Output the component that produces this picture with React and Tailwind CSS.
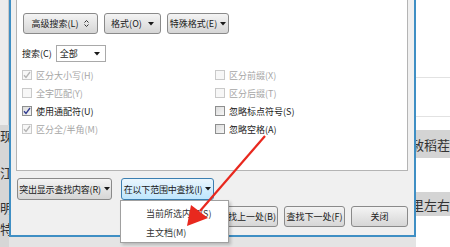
import React from "react";

const FONT = { fontFamily: '"Noto Sans CJK SC", "Noto Sans", sans-serif' };

const Caret = () => (
  <svg width="6" height="4" viewBox="0 0 6 4" className="shrink-0">
    <path d="M0 0 L6 0 L3 3.5 Z" fill="#1a1a1a" />
  </svg>
);

const UpDown = () => (
  <svg width="5" height="7" viewBox="0 0 5 7" className="shrink-0">
    <path d="M0.5 2.5 L2.5 0.5 L4.5 2.5" stroke="#333" strokeWidth="1" fill="none" />
    <path d="M0.5 4.5 L2.5 6.5 L4.5 4.5" stroke="#333" strokeWidth="1" fill="none" />
  </svg>
);

const Button = ({ children, className = "", active = false }) => (
  <div
    className={
      "flex items-center justify-center gap-[6px] whitespace-nowrap rounded-[3px] border text-[9px] leading-none text-[#1a1a1a] " +
      (active
        ? "border-[#3c7fb1] bg-gradient-to-b from-[#eaf6fd] to-[#bee6fd] "
        : "border-[#8a8a8a] bg-gradient-to-b from-[#f4f4f4] to-[#d6d6d6] ") +
      className
    }
  >
    {children}
  </div>
);

const Check = ({ checked, disabled }) => (
  <div
    className={
      "flex h-[10px] w-[10px] shrink-0 items-center justify-center border " +
      (disabled
        ? "border-[#c9c9c9] bg-[#f7f7f7]"
        : "border-[#8e8f8f] bg-gradient-to-br from-[#dcdcdc] to-[#f6f6f6]")
    }
  >
    {checked && (
      <svg width="8" height="8" viewBox="0 0 8 8">
        <path
          d="M1 4.2 L3 6.5 L7 1"
          stroke={disabled ? "#b4b4b4" : "#2f3a8f"}
          strokeWidth="1.3"
          fill="none"
        />
      </svg>
    )}
  </div>
);

const Option = ({ label, checked = false, disabled = false }) => (
  <div className="flex h-[18px] items-center gap-[4px]">
    <Check checked={checked} disabled={disabled} />
    <span className={"text-[9px] leading-none " + (disabled ? "text-[#a6a6a6]" : "text-[#1a1a1a]")}>
      {label}
    </span>
  </div>
);

export default function App() {
  return (
    <div className="relative flex h-[247px] w-[450px] overflow-hidden bg-[#e2e2e2]" style={FONT}>
      {/* left edge of the document behind */}
      <div className="flex h-full w-[9px] shrink-0 flex-col">
        <div className="h-[125px] border-r border-[#c8c8c8] bg-[#ececec]" />
        <div className="flex flex-1 flex-col items-start bg-[#d6d6d6] text-[13px] leading-none text-[#333]">
          <span className="mt-[4px] whitespace-nowrap">现</span>
          <span className="mt-[24px] whitespace-nowrap">江</span>
          <span className="mt-[22px] whitespace-nowrap">明</span>
          <span className="mt-[8px] whitespace-nowrap">特</span>
        </div>
      </div>

      {/* dialog */}
      <div className="relative z-10 flex w-[407px] shrink-0 flex-col">
        <div className="flex h-[237px] flex-col border-x-2 border-b-2 border-[#3f8fc4] bg-[#f0f0f0] pl-[5px] pr-[6px]">
          {/* options panel */}
          <div className="flex h-[171px] flex-col border-x border-b border-[#b4b4b4] bg-white pl-[5px]">
            <div className="mt-[13px] flex gap-[6px] pl-[1px]">
              <Button className="h-[21px] w-[75px]">
                <span>高级搜索(L)</span>
                <UpDown />
              </Button>
              <Button className="h-[21px] w-[57px]">
                <span>格式(O)</span>
                <Caret />
              </Button>
              <Button className="h-[21px] w-[62px] !gap-[3px]">
                <span>特殊格式(E)</span>
                <Caret />
              </Button>
            </div>

            <div className="mt-[11px] flex h-[17px] items-center gap-[4px]">
              <span className="text-[9px] leading-none text-[#1a1a1a]">搜索(C)</span>
              <div className="flex h-[17px] w-[50px] items-center justify-between border border-[#a9a9a9] bg-white pl-[3px] pr-[5px]">
                <span className="text-[9px] leading-none text-[#1a1a1a]">全部</span>
                <Caret />
              </div>
            </div>

            <div className="mt-[4px] grid grid-cols-[193px_1fr]">
              <Option label="区分大小写(H)" checked disabled />
              <Option label="区分前缀(X)" disabled />
              <Option label="全字匹配(Y)" disabled />
              <Option label="区分后缀(T)" disabled />
              <Option label="使用通配符(U)" checked />
              <Option label="忽略标点符号(S)" />
              <Option label="区分全/半角(M)" checked disabled />
              <Option label="忽略空格(A)" />
            </div>
          </div>

          {/* bottom buttons */}
          <div className="mt-[7px] flex gap-[9px] pl-[1px]">
            <Button className="h-[22px] w-[95px] !gap-[3px] tracking-[-0.2px]">
              <span>突出显示查找内容(R)</span>
              <Caret />
            </Button>
            <Button active className="h-[22px] w-[93px] !gap-[3px] tracking-[-0.2px]">
              <span>在以下范围中查找(I)</span>
              <Caret />
            </Button>
          </div>
          <div className="mt-[6px] flex justify-end gap-[6px]">
            <Button className="h-[21px] w-[61px]">查找上一处(B)</Button>
            <Button className="h-[21px] w-[61px]">查找下一处(F)</Button>
            <Button className="h-[21px] w-[57px]">关闭</Button>
          </div>
        </div>
        <div className="flex-1 bg-[#e4e4e4]" />
      </div>

      {/* right edge of the document behind */}
      <div className="flex h-full flex-1 flex-col border-r-[3px] border-[#cfcfcf] bg-white text-[13px] leading-none text-[#333]">
        <div className="h-[78px] border-b border-[#e2e2e2]" />
        <div className="h-[39px] border-b border-[#e2e2e2]" />
        <div className="mt-[13px] flex h-[28px] items-center bg-[#d4d4d4]">
          <span className="ml-[-5px] whitespace-nowrap">赦稻茬</span>
        </div>
        <div className="h-[34px]" />
        <div className="flex h-[24px] items-center bg-[#d4d4d4]">
          <span className="ml-[-5px] whitespace-nowrap">里左右</span>
        </div>
        <div className="flex-1" />
      </div>

      {/* dropdown menu */}
      <div className="absolute left-[120px] top-[200px] z-20 flex h-[43px] w-[109px] flex-col border border-[#a0a0a0] bg-white text-[9px] leading-none text-[#333] shadow-[2px_2px_3px_rgba(0,0,0,0.2)]">
        <div className="flex h-[22px] items-center pl-[25px] pt-[2px]">当前所选内容(S)</div>
        <div className="flex h-[19px] items-center pl-[25px]">主文档(M)</div>
      </div>

      {/* red arrow */}
      <svg className="pointer-events-none absolute left-0 top-0 z-30" width="450" height="247" viewBox="0 0 450 247">
        <line x1="265" y1="136" x2="200" y2="211" stroke="#e8281e" strokeWidth="2.2" />
        <path d="M187 226 L191 205 L208 218 Z" fill="#e8281e" />
      </svg>
    </div>
  );
}
